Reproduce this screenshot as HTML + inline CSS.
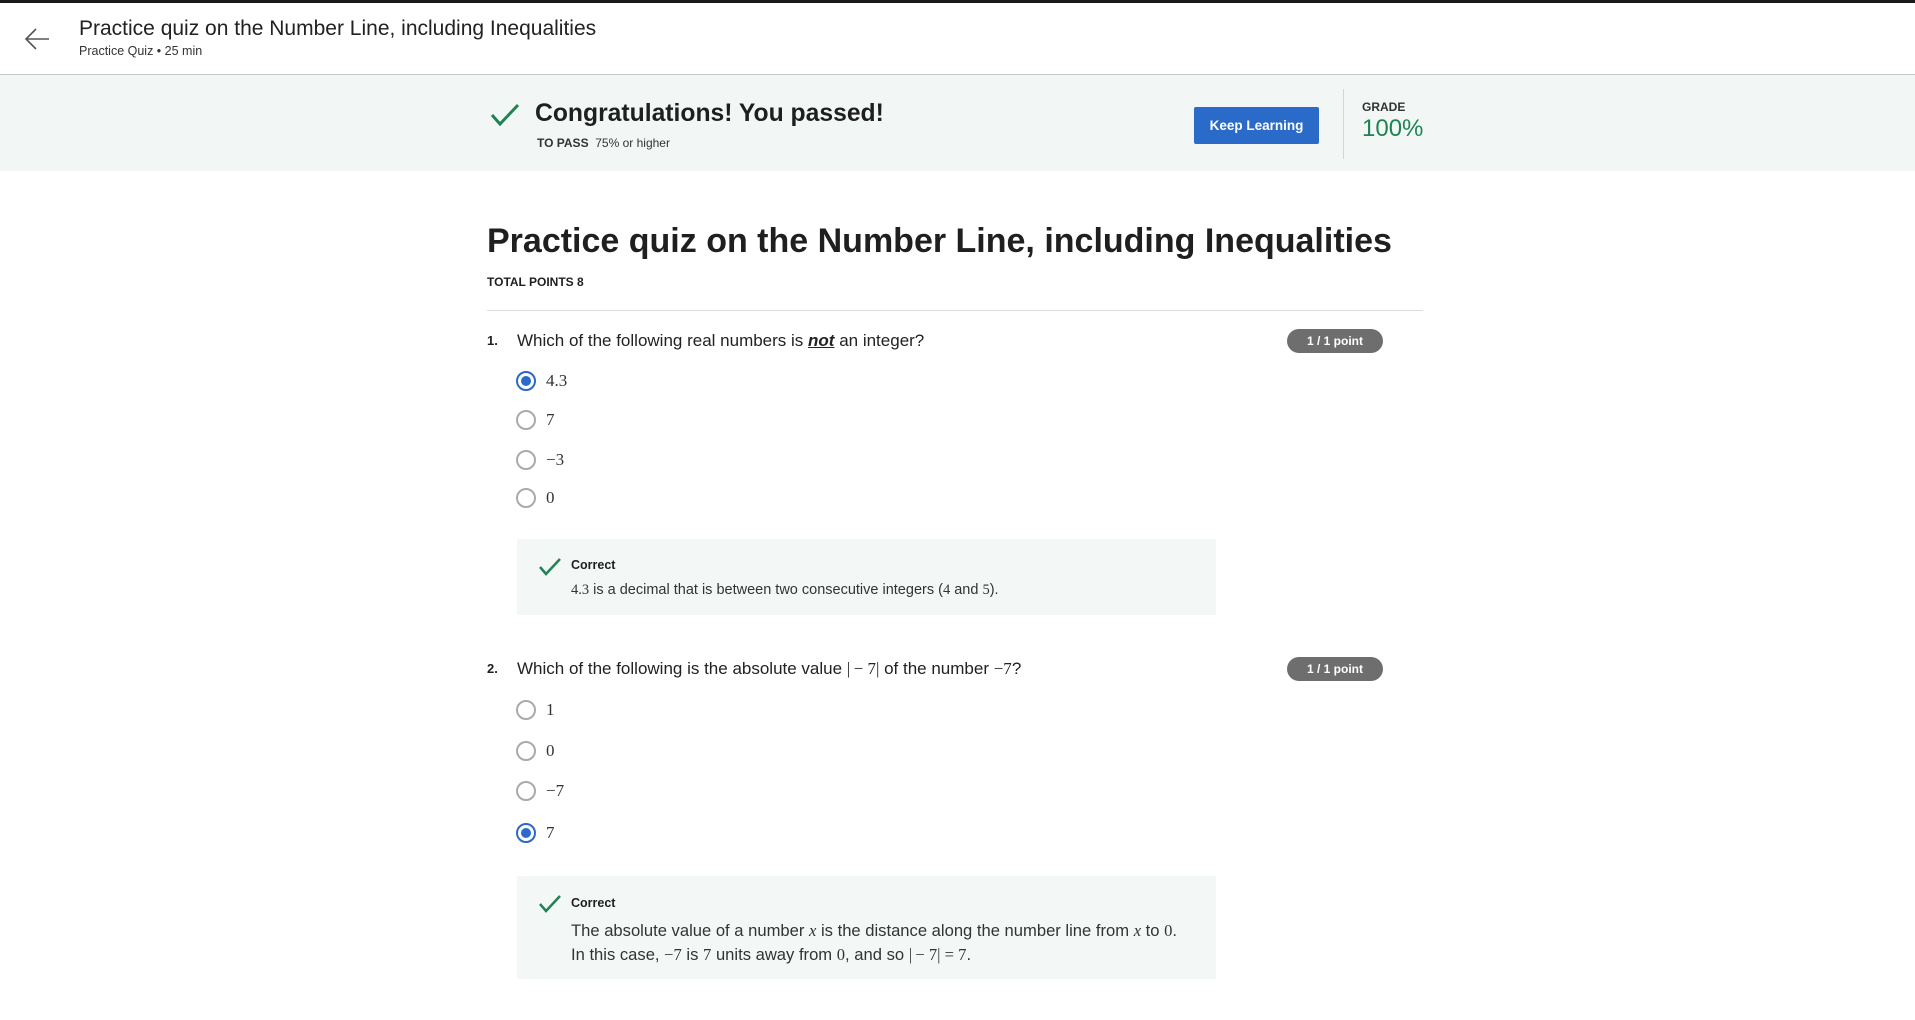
<!DOCTYPE html>
<html><head><meta charset="utf-8"><style>
*{margin:0;padding:0;box-sizing:border-box}
body{width:1915px;height:1020px;background:#fff;font-family:"Liberation Sans",sans-serif;color:#1f1f1f;position:relative;overflow:hidden}
.a{position:absolute;white-space:nowrap}
.m{font-family:"Liberation Serif","DejaVu Serif",serif}
.radio{position:absolute;width:20px;height:20px;border:2px solid #aaa;border-radius:50%;background:#fff}
.radio.on{border-color:#2a6ac8}
.radio.on::after{content:"";position:absolute;left:3px;top:3px;width:10px;height:10px;border-radius:50%;background:#2a6ac8}
.opt{position:absolute;font-family:"Liberation Serif",serif;font-size:17px;color:#333}
.badge{position:absolute;width:96px;height:24px;border-radius:12px;background:#6e6e6e;color:#fff;font-size:12px;font-weight:bold;text-align:center;line-height:24px}
.fb{position:absolute;left:517px;width:699px;background:#f3f8f6}
</style></head><body>
<div class="a" style="left:0;top:0;width:1915px;height:3px;background:#1a1a1a"></div>
<svg class="a" style="left:24px;top:27px" width="26" height="24" viewBox="0 0 26 24"><path d="M25 12H2M12 2L2 12l10 10" fill="none" stroke="#555" stroke-width="1.6"/></svg>
<div class="a" style="left:79px;top:17px;font-size:21px;color:#222">Practice quiz on the Number Line, including Inequalities</div>
<div class="a" style="left:79px;top:44px;font-size:12.5px;color:#333">Practice Quiz • 25 min</div>
<div class="a" style="left:0;top:74px;width:1915px;height:97px;background:#f2f7f5;border-top:1.5px solid #c8c8c8"></div>
<svg class="a" style="left:490px;top:103px" width="30" height="24" viewBox="0 0 30 24"><path d="M2 12l8 9L28 2" fill="none" stroke="#1f8354" stroke-width="3"/></svg>
<div class="a" style="left:535px;top:100px;font-size:24.7px;font-weight:bold;color:#1f1f1f">Congratulations! You passed!</div>
<div class="a" style="left:537px;top:136px;font-size:12px;color:#333"><b>TO PASS</b>&nbsp; 75% or higher</div>
<div class="a" style="left:1194px;top:107px;width:125px;height:37px;background:#2a6ac8;border-radius:2px;color:#fff;font-size:13.5px;font-weight:bold;text-align:center;line-height:37px">Keep Learning</div>
<div class="a" style="left:1343px;top:89px;width:1px;height:70px;background:#d6d6d6"></div>
<div class="a" style="left:1362px;top:100px;font-size:12px;font-weight:bold;color:#333">GRADE</div>
<div class="a" style="left:1362px;top:115px;font-size:24px;color:#1f8354">100%</div>
<div class="a" style="left:487px;top:222px;font-size:34px;font-weight:bold;color:#1f1f1f">Practice quiz on the Number Line, including Inequalities</div>
<div class="a" style="left:487px;top:275px;font-size:12px;font-weight:bold;color:#1f1f1f">TOTAL POINTS 8</div>
<div class="a" style="left:487px;top:310px;width:936px;height:1px;background:#ddd"></div>

<div class="a" style="left:487px;top:333px;font-size:13px;font-weight:bold">1.</div>
<div class="a" style="left:517px;top:331px;font-size:17px;color:#222">Which of the following real numbers is <b><i><u>not</u></i></b> an integer?</div>
<div class="badge" style="left:1287px;top:329px">1 / 1 point</div>
<div class="radio on" style="left:516px;top:371px"></div><div class="opt" style="left:546px;top:371px">4.3</div>
<div class="radio" style="left:516px;top:410px"></div><div class="opt" style="left:546px;top:410px">7</div>
<div class="radio" style="left:516px;top:450px"></div><div class="opt" style="left:546px;top:450px">−3</div>
<div class="radio" style="left:516px;top:488px"></div><div class="opt" style="left:546px;top:488px">0</div>
<div class="fb" style="top:539px;height:76px"></div>
<svg class="a" style="left:538px;top:557px" width="24" height="20" viewBox="0 0 24 20"><path d="M2 10l6 7L22 2" fill="none" stroke="#1f8354" stroke-width="2.5"/></svg>
<div class="a" style="left:571px;top:558px;font-size:12.5px;font-weight:bold">Correct</div>
<div class="a" style="left:571px;top:582px;font-size:14.5px;color:#333"><span class="m">4.3</span> is a decimal that is between two consecutive integers (<span class="m">4</span> and <span class="m">5</span>).</div>

<div class="a" style="left:487px;top:661px;font-size:13px;font-weight:bold">2.</div>
<div class="a" style="left:517px;top:659px;font-size:17px;color:#222">Which of the following is the absolute value <span class="m">|&thinsp;− 7|</span> of the number <span class="m">−7</span>?</div>
<div class="badge" style="left:1287px;top:657px">1 / 1 point</div>
<div class="radio" style="left:516px;top:700px"></div><div class="opt" style="left:546px;top:700px">1</div>
<div class="radio" style="left:516px;top:741px"></div><div class="opt" style="left:546px;top:741px">0</div>
<div class="radio" style="left:516px;top:781px"></div><div class="opt" style="left:546px;top:781px">−7</div>
<div class="radio on" style="left:516px;top:823px"></div><div class="opt" style="left:546px;top:823px">7</div>
<div class="fb" style="top:876px;height:103px"></div>
<svg class="a" style="left:538px;top:894px" width="24" height="20" viewBox="0 0 24 20"><path d="M2 10l6 7L22 2" fill="none" stroke="#1f8354" stroke-width="2.5"/></svg>
<div class="a" style="left:571px;top:896px;font-size:12.5px;font-weight:bold">Correct</div>
<div class="a" style="left:571px;top:919px;font-size:16.6px;color:#333;line-height:24px">The absolute value of a number <i class="m">x</i> is the distance along the number line from <i class="m">x</i> to <span class="m">0</span>.<br>In this case, <span class="m">−7</span> is <span class="m">7</span> units away from <span class="m">0</span>, and so <span class="m">|&thinsp;− 7| = 7</span>.</div>
</body></html>
